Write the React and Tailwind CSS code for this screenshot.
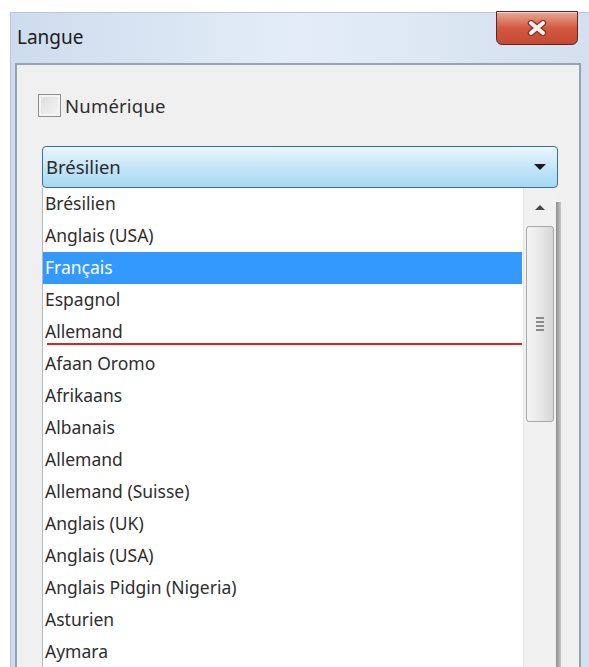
import React from "react";

const items = [
  "Brésilien",
  "Anglais (USA)",
  "Français",
  "Espagnol",
  "Allemand",
  "Afaan Oromo",
  "Afrikaans",
  "Albanais",
  "Allemand",
  "Allemand (Suisse)",
  "Anglais (UK)",
  "Anglais (USA)",
  "Anglais Pidgin (Nigeria)",
  "Asturien",
  "Aymara",
];

function CloseButton() {
  return (
    <div className="w-[82px] h-[34px] rounded-b-[6px] border border-[#5a2a22] bg-gradient-to-b from-[#e9a897] via-[#d2583f] to-[#c64a33] flex items-center justify-center shadow-[inset_0_1px_0_rgba(255,255,255,0.5)]">
      <svg width="20" height="16" viewBox="0 0 20 16">
        <path d="M4 3 L16 13 M16 3 L4 13" stroke="#7a3a2c" strokeWidth="6.5" strokeLinecap="round" />
        <path d="M4 3 L16 13 M16 3 L4 13" stroke="#f4efec" strokeWidth="4" strokeLinecap="round" />
      </svg>
    </div>
  );
}

function Scrollbar() {
  return (
    <div className="w-[33px] shrink-0 bg-[#f1f1f1] flex flex-col border-l border-[#e6e6e6]">
      <div className="h-[36px] mx-[2px] mt-[1px] flex items-center justify-center">
        <svg width="12" height="7" viewBox="0 0 12 7">
          <path d="M1 6 L6 1 L11 6 Z" fill="#4a4a4a" />
        </svg>
      </div>
      <div className="h-[196px] mx-[2px] mt-[1px] rounded-[3px] border border-[#a9a9a9] bg-gradient-to-r from-[#f4f4f4] via-[#e8e8e8] to-[#d6d6d6] flex items-center justify-center">
        <div className="flex flex-col gap-[2px]">
          <div className="w-[8px] h-[2px] bg-[#8a8a8a]" />
          <div className="w-[8px] h-[2px] bg-[#8a8a8a]" />
          <div className="w-[8px] h-[2px] bg-[#8a8a8a]" />
          <div className="w-[8px] h-[2px] bg-[#8a8a8a]" />
        </div>
      </div>
    </div>
  );
}

export default function App() {
  return (
    <div className="h-[667px] w-[589px] overflow-hidden bg-white font-['Noto_Sans',sans-serif] text-[#2e2e2e]">
      <div className="ml-[10px] mt-[12px] h-[655px] bg-gradient-to-r from-[#cddcee] via-[#e4edf7] to-[#d3e0ef] border-l border-t border-[#b9c7d8] relative">
        <div className="h-[50px] relative">
          <div className="pl-[6px] pt-[12px] text-[19px] leading-[24px] text-[#1b1b1b]">Langue</div>
          <div className="absolute left-[485px] top-[-2px]">
            <CloseButton />
          </div>
        </div>
        <div className="ml-[4px] w-[566px] h-[610px] bg-[#f0f0f0] border-2 border-[#9aa3ad]">
          <div className="flex items-start pl-[21px] pt-[29px] h-[81px]">
            <div className="w-[23px] h-[23px] border border-[#8e8f8f] bg-gradient-to-br from-[#dcdcdc] to-[#f6f6f6] shadow-[inset_0_0_0_2px_#f4f4f4]" />
            <span className="ml-[4px] text-[18.5px] leading-[23px] tracking-[0.2px]">Numérique</span>
          </div>
          <div className="ml-[25px] w-[516px] h-[42px] rounded-[4px] border border-[#3b6f96] bg-gradient-to-b from-[#eaf6fd] via-[#c7e6f8] to-[#a6d8f4] flex items-center pl-[3px] pr-[10px]">
            <span className="text-[18.5px] text-[#2a2a2a] flex-1">Brésilien</span>
            <svg width="14" height="8" viewBox="0 0 14 8">
              <path d="M1 1 L13 1 L7 7 Z" fill="#1a1a1a" />
            </svg>
          </div>
          <div className="ml-[25px] flex">
            <div className="w-[514px] h-[500px] bg-white border-l border-[#b8b8b8] flex">
              <div className="flex-1 pr-[1px]">
                {items.map((t, i) => (
                  <div
                    key={i}
                    className={`h-[32px] leading-[30px] pl-[2px] text-[17.5px] relative ${i === 2 ? "bg-[#3399ff] text-white" : ""}`}
                  >
                    {t}
                    {i === 4 && (
                      <div className="absolute left-[4px] right-[0px] bottom-[3px] h-[2px] bg-[#e0231c]" />
                    )}
                  </div>
                ))}
              </div>
              <Scrollbar />
            </div>
            <div className="w-[5px] mt-[14px] h-[480px] bg-gradient-to-r from-[#8c8c8c] to-[#c8c8c8]" />
          </div>
        </div>
      </div>
    </div>
  );
}
